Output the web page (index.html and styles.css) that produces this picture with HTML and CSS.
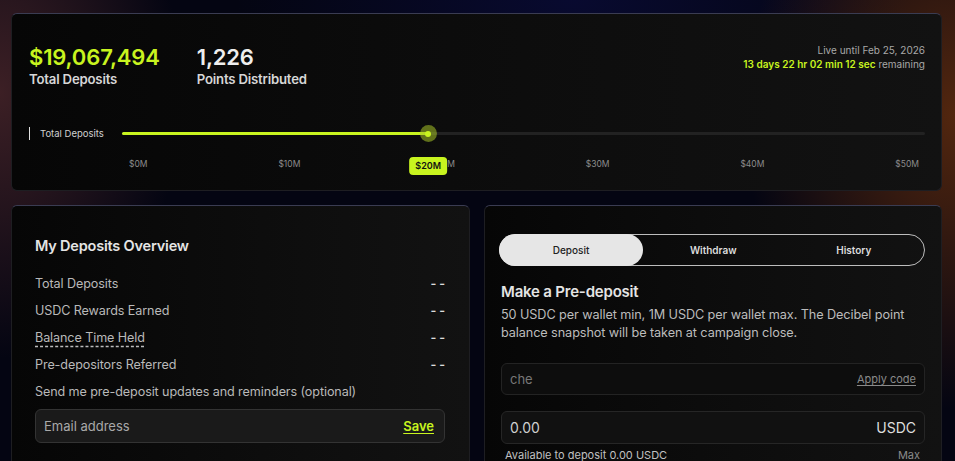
FILE: index.html
```html
<!DOCTYPE html>
<html lang="en">
<head>
<meta charset="utf-8">
<title>Pre-deposit</title>
<link rel="stylesheet" href="styles.css">
</head>
<body>
<main class="page">
  <section class="card stats">
    <div class="stats-head">
      <div class="metric">
        <div class="metric-value lime">$19,067,494</div>
        <div class="metric-label">Total Deposits</div>
      </div>
      <div class="metric">
        <div class="metric-value">1,226</div>
        <div class="metric-label">Points Distributed</div>
      </div>
      <div class="countdown">
        <div class="live">Live until Feb 25, 2026</div>
        <div class="remaining"><span class="lime">13 days 22 hr 02 min 12 sec</span> remaining</div>
      </div>
    </div>
    <div class="progress">
      <div class="progress-label">Total Deposits</div>
      <div class="progress-body">
        <div class="track">
          <div class="fill" style="width: 38.13%"></div>
          <div class="thumb" style="left: 38.13%"></div>
          <div class="badge" style="left: 38.13%">$20M</div>
        </div>
        <div class="ticks">
          <span>$0M</span><span>$10M</span><span class="under">$20M</span><span>$30M</span><span>$40M</span><span>$50M</span>
        </div>
      </div>
    </div>
  </section>

  <div class="columns">
    <section class="card overview">
      <h2 class="title">My Deposits Overview</h2>
      <div class="row"><span>Total Deposits</span><span class="dash">- -</span></div>
      <div class="row"><span>USDC Rewards Earned</span><span class="dash">- -</span></div>
      <div class="row"><span class="dotted">Balance Time Held</span><span class="dash">- -</span></div>
      <div class="row"><span>Pre-depositors Referred</span><span class="dash">- -</span></div>
      <div class="row"><span>Send me pre-deposit updates and reminders (optional)</span></div>
      <div class="field email">
        <span class="placeholder">Email address</span>
        <span class="save">Save</span>
      </div>
    </section>

    <section class="card deposit">
      <div class="tabs">
        <div class="tab active">Deposit</div>
        <div class="tab">Withdraw</div>
        <div class="tab">History</div>
      </div>
      <h2 class="title big">Make a Pre-deposit</h2>
      <p class="desc">50 USDC per wallet min, 1M USDC per wallet max. The Decibel point balance snapshot will be taken at campaign close.</p>
      <div class="field code">
        <span class="code-text">che</span>
        <span class="apply">Apply code</span>
      </div>
      <div class="field amount">
        <span>0.00</span>
        <span class="unit">USDC</span>
      </div>
      <div class="avail"><span>Available to deposit 0.00 USDC</span><span class="max">Max</span></div>
    </section>
  </div>
</main>
</body>
</html>
```

FILE: styles.css
```css
* { box-sizing: border-box; }

html, body {
  margin: 0;
  height: 100%;
  overflow: hidden;
}

body {
  font-family: Inter, "Noto Sans", sans-serif;
  color: #d8d8d8;
  background:
    radial-gradient(ellipse 260px 380px at 0% 20%, rgba(70, 36, 40, 0.85), transparent 70%),
    radial-gradient(ellipse 300px 420px at 100% 25%, rgba(96, 44, 14, 0.85), transparent 70%),
    radial-gradient(ellipse 420px 200px at 60% 0%, rgba(10, 12, 60, 0.7), transparent 80%),
    #040512;
}

.page {
  padding: 13px 13px 0 11px;
  display: flex;
  flex-direction: column;
  gap: 14px;
}

.lime { color: #c8f41f; }

.card {
  background: linear-gradient(90deg, #060606 0%, #0d0d0d 55%, #121212 100%);
  border: 1px solid #1e1e22;
  border-top-color: #3a3c52;
  border-radius: 6px;
}

/* ---- top stats card ---- */
.stats {
  height: 178px;
  padding: 29px 16px 0 17px;
}

.stats-head {
  display: flex;
  align-items: flex-start;
}

.metric { margin-right: 37px; }

.metric-value {
  font-size: 22px;
  font-weight: 600;
  line-height: 28px;
  letter-spacing: -0.15px;
  color: #eeeeee;
}
.metric-value.lime { color: #c8f41f; }

.metric-label {
  font-size: 13.2px;
  font-weight: 600;
  color: #d6d6d6;
  letter-spacing: -0.2px;
  line-height: 16px;
}

.countdown {
  margin-left: auto;
  text-align: right;
  font-size: 10px;
  line-height: 14px;
  color: #a8a8a8;
}
.countdown .lime { font-weight: 600; }

.progress {
  display: flex;
  margin-top: 40px;
}

.progress-label {
  width: 93px;
  height: 13px;
  border-left: 1px solid #e0e0e0;
  padding-left: 10px;
  font-size: 9.5px;
  line-height: 13px;
  color: #d0d0d0;
  flex-shrink: 0;
}

.progress-body { flex: 1; }

.track {
  position: relative;
  height: 3px;
  margin-top: 5px;
  background: #222222;
  border-radius: 2px;
}

.fill {
  height: 3px;
  background: #c8f41f;
  border-radius: 2px;
}

.thumb {
  position: absolute;
  top: 50%;
  width: 17px;
  height: 17px;
  margin: -8.5px 0 0 -8.5px;
  border-radius: 50%;
  background: rgba(168, 196, 40, 0.55);
}
.thumb::after {
  content: "";
  position: absolute;
  left: 5.5px;
  top: 5.5px;
  width: 6px;
  height: 6px;
  border-radius: 50%;
  background: #c8f41f;
}

.badge {
  position: absolute;
  top: 25px;
  transform: translateX(-50%);
  background: #c8f41f;
  color: #111;
  font-size: 9px;
  font-weight: 600;
  padding: 3px 6px;
  line-height: 12px;
  height: 18px;
  border-radius: 4px;
  z-index: 2;
}

.ticks {
  display: flex;
  justify-content: space-between;
  padding: 0 6px 0 7px;
  margin-top: 24px;
  font-size: 8.5px;
  color: #8c8c8c;
}

/* ---- lower columns ---- */
.columns {
  display: flex;
  gap: 14px;
}

.overview {
  width: 459px;
  height: 270px;
  padding: 31px 24px 0 23px;
}

.deposit {
  flex: 1;
  height: 270px;
  padding: 28px 16px 0 14px;
}

.title {
  margin: 0 0 15px 0;
  font-size: 14.5px;
  font-weight: 600;
  color: #e4e4e4;
  letter-spacing: -0.2px;
  line-height: 18px;
}

.row {
  display: flex;
  justify-content: space-between;
  font-size: 12.6px;
  color: #b9b9b9;
  line-height: 27px;
  letter-spacing: -0.1px;
}

.dash { color: #dcdcdc; font-weight: 600; }

.dotted {
  text-decoration: underline dashed #bbbbbb;
  text-underline-offset: 4px;
}

.field {
  display: flex;
  justify-content: space-between;
  align-items: center;
  border-radius: 6px;
}

.email {
  margin-top: 4px;
  height: 34px;
  padding: 0 10px 0 8px;
  background: #1a1a1a;
  border: 1px solid #333333;
  font-size: 13px;
}
.placeholder { color: #a9a9a9; }
.save {
  color: #c8f41f;
  font-weight: 600;
  text-decoration: underline;
  text-underline-offset: 2px;
}

.tabs {
  display: flex;
  height: 32px;
  border: 1px solid #bdbdbd;
  border-radius: 16px;
  margin-bottom: 17px;
}
.tab {
  flex: 1;
  display: flex;
  align-items: center;
  justify-content: center;
  font-size: 10px;
  font-weight: 600;
  color: #dcdcdc;
  border-radius: 16px;
}
.tab.active {
  flex: 0 0 144px;
  margin: -1px 0 -1px -1px;
  background: #e6e6e6;
  color: #222;
  font-weight: 500;
}

.title.big {
  font-size: 15px;
  margin: 0 0 5px 2px;
}

.desc {
  margin: 0 0 21px 2px;
  font-size: 12.7px;
  line-height: 18px;
  color: #bcbcbc;
  letter-spacing: -0.1px;
}

.code {
  margin-left: 2px;
  height: 32px;
  padding: 0 8px;
  border: 1px solid #232323;
  background: #0d0d0d;
  font-size: 13px;
}
.code-text { color: #777; }
.apply {
  color: #8a8a8a;
  font-size: 11px;
  text-decoration: underline;
  text-underline-offset: 2px;
}

.amount {
  margin: 16px 0 0 2px;
  height: 33px;
  padding: 0 8px;
  border: 1px solid #262626;
  background: #111;
  font-size: 14px;
  color: #cfcfcf;
}
.unit { color: #dedede; }

.avail {
  display: flex;
  justify-content: space-between;
  margin: 4px 5px 0 6px;
  font-size: 11px;
  color: #c0c0c0;
}
.max { color: #8a8a8a; }
```
